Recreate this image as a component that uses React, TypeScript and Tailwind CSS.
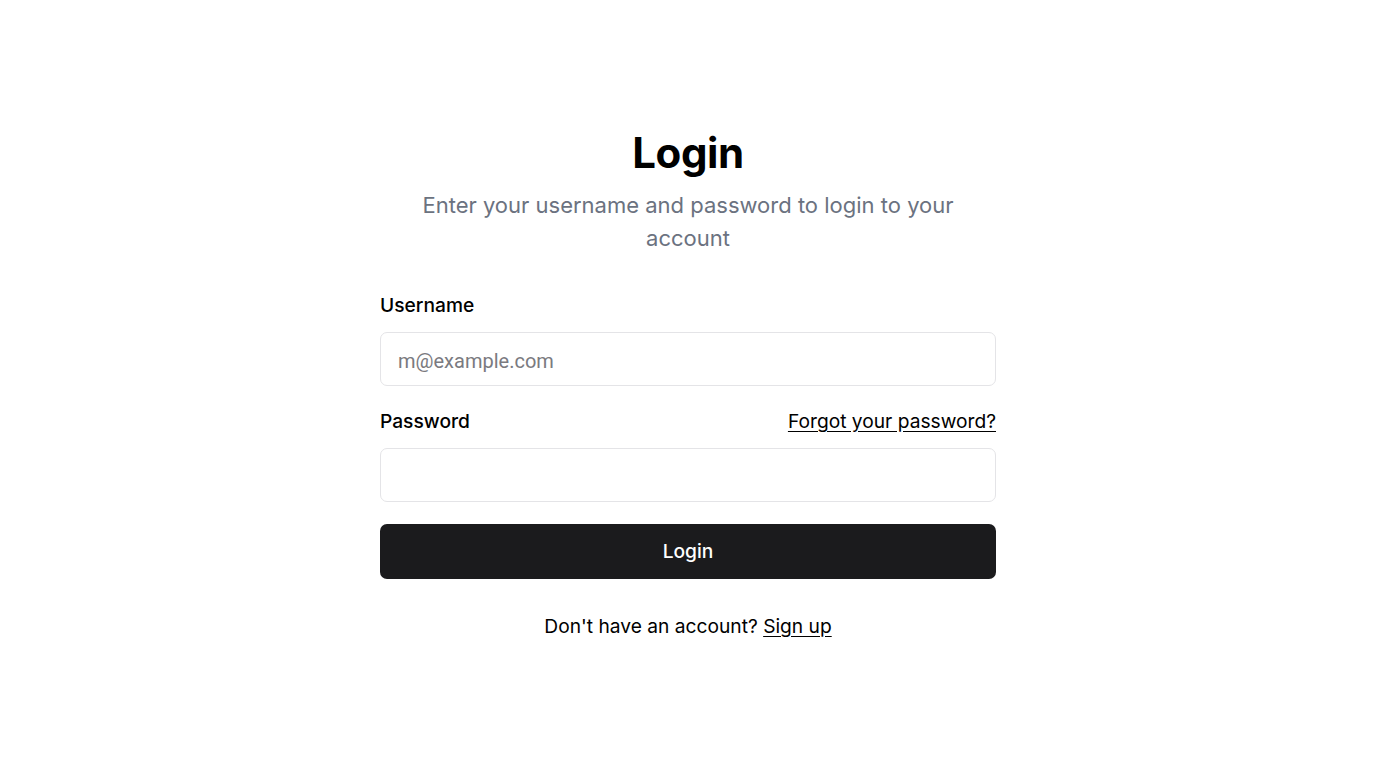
export default function App() {
  return (
    <div className="min-h-screen w-full bg-white flex items-center justify-center font-['Inter',sans-serif] text-black">
      <div className="w-[616px] pt-[2px] flex flex-col">
        {/* Header */}
        <div className="flex flex-col items-center text-center">
          <h1 className="text-[42px] leading-[46px] font-bold tracking-[-0.01em]">Login</h1>
          <p className="mt-[13px] max-w-[570px] text-[22px] leading-[33px] text-[#6b7280]">
            Enter your username and password to login to your account
          </p>
        </div>

        {/* Form */}
        <form className="mt-[37px] flex flex-col" onSubmit={(e) => e.preventDefault()}>
          <label className="text-[19.2px] leading-[27px] font-medium" htmlFor="username">
            Username
          </label>
          <input
            id="username"
            type="text"
            placeholder="m@example.com"
            className="mt-[13px] h-[54px] w-full rounded-[7px] border border-[#e4e4e7] px-[17px] pt-[3px] text-[20px] font-['Roboto',sans-serif] placeholder:text-[#7a7a80] outline-none"
          />

          <div className="mt-[22px] flex items-center justify-between">
            <label className="text-[19.2px] leading-[27px] font-medium" htmlFor="password">
              Password
            </label>
            <a href="#" className="text-[19.2px] leading-[27px] underline underline-offset-[3px]">
              Forgot your password?
            </a>
          </div>
          <input
            id="password"
            type="password"
            className="mt-[13px] h-[54px] w-full rounded-[7px] border border-[#e4e4e7] px-[17px] text-[20px] outline-none"
          />

          <button
            type="submit"
            className="mt-[22px] h-[55px] w-full rounded-[7px] bg-[#1b1b1d] text-white text-[19.2px] font-medium"
          >
            Login
          </button>
        </form>

        <p className="mt-[34px] text-center text-[19.2px] leading-[27px]">
          Don't have an account?{" "}
          <a href="#" className="underline underline-offset-[3px]">
            Sign up
          </a>
        </p>
      </div>
    </div>
  );
}
